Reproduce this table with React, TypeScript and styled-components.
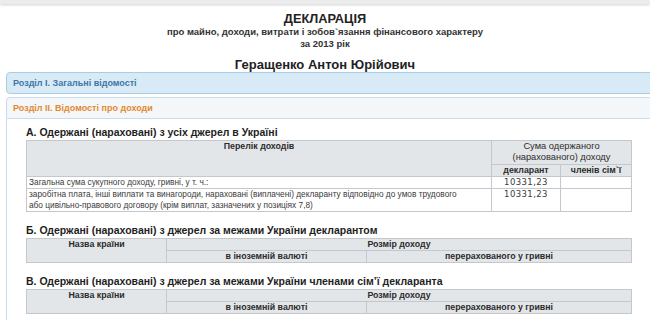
import React from 'react';
import styled, { createGlobalStyle } from 'styled-components';

const GlobalStyle = createGlobalStyle`
  html, body {
    margin: 0;
    padding: 0;
    background: #ffffff;
    overflow: hidden;
  }
  body {
    width: 650px;
    height: 320px;
    font-family: "Liberation Sans", Arial, sans-serif;
    color: #222;
  }
`;

const TopStrip = styled.div`
  height: 4px;
  background: #ececec;
  box-shadow: 0 1px 3px rgba(0, 0, 0, 0.18);
`;

const TitleBlock = styled.header`
  display: flex;
  flex-direction: column;
  align-items: center;
  padding-top: 7px;
  text-align: center;
`;

const Title = styled.h1`
  margin: 0;
  font-size: 12.8px;
  line-height: 15px;
  font-weight: bold;
  color: #222;
`;

const Subtitle = styled.div`
  font-size: 9.5px;
  line-height: 12px;
  font-weight: bold;
  color: #333;
`;

const Person = styled.h2`
  margin: 8px 0 0;
  font-size: 13px;
  line-height: 14px;
  font-weight: bold;
  color: #222;
`;

const Sections = styled.div`
  margin: 0 0 0 6px;
  width: 670px;
  display: flex;
  flex-direction: column;
  gap: 3px;
`;

const SectionHeader = styled.div<{ $open?: boolean }>`
  height: 20px;
  display: flex;
  align-items: center;
  padding-left: 6px;
  font-size: 9px;
  font-weight: bold;
  border: 1px solid ${(p) => (p.$open ? '#c9dceb' : '#a9cce7')};
  border-radius: ${(p) => (p.$open ? '4px 4px 0 0' : '4px')};
  background: ${(p) => (p.$open ? '#f4f7f9' : '#d9eaf7')};
  color: ${(p) => (p.$open ? '#e4872e' : '#3e77a6')};
`;

const SectionBody = styled.div`
  border-left: 1px solid #c9dceb;
  padding: 7px 0 20px 19px;
  background: #ffffff;
`;

const Heading = styled.h3`
  margin: 0 0 2px;
  font-size: 10.5px;
  line-height: 12px;
  font-weight: bold;
  color: #1e1e1e;
`;

const Table = styled.table`
  width: 605px;
  border-collapse: collapse;
  table-layout: fixed;
  margin-bottom: 12px;
  font-family: "Liberation Sans", Arial, sans-serif;
  color: #3a3a3a;
`;

const Th = styled.th<{ $bold?: boolean }>`
  background: #e3e6e9;
  border: 1px solid #c4c8cc;
  font-size: ${(p) => (p.$bold ? '8.8px' : '9.3px')};
  font-weight: ${(p) => (p.$bold ? 'bold' : 'normal')};
  vertical-align: top;
  text-align: center;
  padding: 0 3px;
  line-height: 11px;
  color: #2c2c2c;
`;

const Td = styled.td<{ $num?: boolean }>`
  border: 1px solid #c4c8cc;
  padding: 0 2px;
  line-height: 11px;
  vertical-align: top;
  text-align: ${(p) => (p.$num ? 'center' : 'left')};
  font-family: ${(p) => (p.$num ? '"DejaVu Sans", Verdana, sans-serif' : 'inherit')};
  font-size: ${(p) => (p.$num ? '8.5px' : '8.3px')};
  letter-spacing: ${(p) => (p.$num ? '0.4px' : '0')};
`;

const foreignRows = [
  'Б. Одержані (нараховані) з джерел за межами України декларантом',
  'В. Одержані (нараховані) з джерел за межами України членами сім’ї декларанта',
];

export default function App() {
  return (
    <>
      <GlobalStyle />
      <TopStrip />
      <TitleBlock>
        <Title>ДЕКЛАРАЦІЯ</Title>
        <Subtitle>про майно, доходи, витрати і зобов`язання фінансового характеру</Subtitle>
        <Subtitle>за 2013 рік</Subtitle>
        <Person>Геращенко Антон Юрійович</Person>
      </TitleBlock>
      <Sections>
        <SectionHeader>Розділ І. Загальні відомості</SectionHeader>
        <div>
          <SectionHeader $open>Розділ ІІ. Відомості про доходи</SectionHeader>
          <SectionBody>
            <Heading>А. Одержані (нараховані) з усіх джерел в Україні</Heading>
            <Table>
              <colgroup>
                <col style={{ width: 465 }} />
                <col style={{ width: 69 }} />
                <col style={{ width: 71 }} />
              </colgroup>
              <thead>
                <tr style={{ height: 24 }}>
                  <Th $bold rowSpan={2}>Перелік доходів</Th>
                  <Th colSpan={2}>Сума одержаного (нарахованого) доходу</Th>
                </tr>
                <tr>
                  <Th $bold>декларант</Th>
                  <Th $bold>членів сім`ї</Th>
                </tr>
              </thead>
              <tbody>
                <tr>
                  <Td>Загальна сума сукупного доходу, гривні, у т. ч.:</Td>
                  <Td $num>10331,23</Td>
                  <Td />
                </tr>
                <tr>
                  <Td>
                    заробітна плата, інші виплати та винагороди, нараховані (виплачені) декларанту
                    відповідно до умов трудового
                    <br />
                    або цивільно-правового договору (крім виплат, зазначених у позиціях 7,8)
                  </Td>
                  <Td $num>10331,23</Td>
                  <Td />
                </tr>
              </tbody>
            </Table>
            {foreignRows.map((title) => (
              <React.Fragment key={title}>
                <Heading>{title}</Heading>
                <Table>
                  <colgroup>
                    <col style={{ width: 140 }} />
                    <col style={{ width: 200 }} />
                    <col style={{ width: 265 }} />
                  </colgroup>
                  <thead>
                    <tr>
                      <Th $bold rowSpan={2}>Назва країни</Th>
                      <Th $bold colSpan={2}>Розмір доходу</Th>
                    </tr>
                    <tr>
                      <Th $bold>в іноземній валюті</Th>
                      <Th $bold>перерахованого у гривні</Th>
                    </tr>
                  </thead>
                </Table>
              </React.Fragment>
            ))}
          </SectionBody>
        </div>
      </Sections>
    </>
  );
}
